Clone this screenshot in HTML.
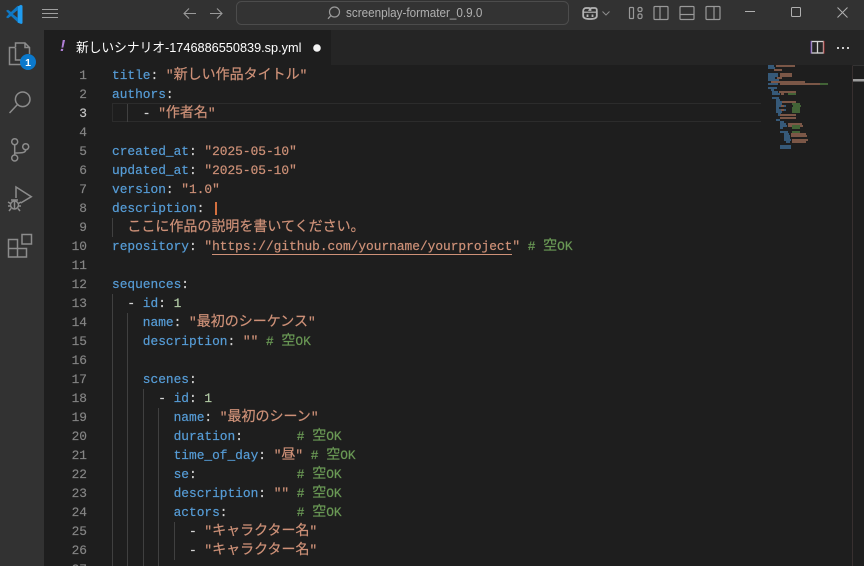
<!DOCTYPE html>
<html><head><meta charset="utf-8"><style>
html,body{margin:0;padding:0;background:#1e1e1e}
#r{position:relative;width:864px;height:566px;overflow:hidden;background:#1e1e1e;font-family:"Liberation Mono","Noto Sans CJK JP",monospace;font-size:12.83px}
#r>*{position:absolute}
.l{left:112px;height:19px;line-height:19px;white-space:pre;color:#d4d4d4;margin-top:1px;-webkit-text-stroke:.2px}
.n{left:60px;width:27px;text-align:right;height:19px;line-height:19px;color:#858585;margin-top:1px;-webkit-text-stroke:.15px}
.k{color:#569cd6}.s{color:#ce9178}.c{color:#6a9955}
i{font-style:normal;font-size:14px;font-family:"Noto Sans CJK JP",sans-serif;line-height:1}
.g{width:1px;background:#404040}
</style></head><body><div id="r">
<div style="left:0;top:0;width:864px;height:30px;background:#323232"></div>
<div style="left:0;top:30px;width:44px;height:536px;background:#323232"></div>
<div style="left:44px;top:30px;width:820px;height:35px;background:#252525"></div>
<div style="left:44px;top:30px;width:287px;height:35px;background:#1e1e1e"></div>

<svg style="left:0;top:0" width="864" height="566" fill="none">
<path d="M21 4.800 17.600 6.500V22.600L21.300 24 22.500 23.200V5.800Z" fill="#1f9cf0"/>
<path d="M17.800 5.600 11 12 8 9.700 6 10.800 9 14 6 17.200 8 18.300 11 16 17.800 22.400V18L12.800 14 17.800 10Z" fill="#0f78c4"/>
<path d="M42 9.500H58M42 13.500H58M42 17.500H58" stroke="#a0a0a0" stroke-width="1"/>
<path d="M196 13.500H184M189 8.500 184 13.500 189 18.500M210 13.500H222M217 8.500 222 13.500 217 18.500" stroke="#9a9a9a" stroke-width="1.100"/>
<rect x="236.500" y="1.500" width="332" height="23" rx="5" fill="#333" stroke="#4c4c4c"/>
<circle cx="334.500" cy="12" r="5" stroke="#9a9a9a" stroke-width="1.200"/><path d="M331 15.500 328 18.800" stroke="#9a9a9a" stroke-width="1.300"/>
<path d="M586 8H589C590 8 590.500 9 590.500 10H589.500C590 9 590.500 8 592 8H595C596.500 8 597 9.500 596.800 11V16C596.800 18 594 19 590 19 586 19 583.200 18 583.200 16V11C583 9.500 584.500 8 586 8Z" stroke="#b4b4b4" stroke-width="1.800"/><path d="M584 12.200H596" stroke="#b4b4b4" stroke-width="1.200"/><path d="M587.500 14.500V17M592.500 14.500V17" stroke="#b4b4b4" stroke-width="1.800"/>
<path d="M602.500 11.500 606 15 609.500 11.500" stroke="#8c8c8c"/>
<g stroke="#999" stroke-width="1.200">
<rect x="629.500" y="7.500" width="4" height="11" rx=".8"/><rect x="638" y="7.500" width="4" height="4" rx="1.500"/><rect x="638" y="14" width="4" height="4.500" rx="1.500"/>
<rect x="654" y="6.500" width="14" height="13" rx="1"/><path d="M660 6.500V19.500"/>
<rect x="680" y="6.500" width="14" height="13" rx="1"/><path d="M680 14.500H694"/>
<rect x="706" y="6.500" width="14" height="13" rx="1"/><path d="M714 6.500V19.500"/>
</g>
<path d="M745 11.500H755" stroke="#b0b0b0"/><rect x="791.500" y="7.500" width="9" height="9" rx="1" stroke="#b0b0b0"/>
<path d="M837.500 7.500 847.500 17.500M847.500 7.500 837.500 17.500" stroke="#b0b0b0"/>

<g stroke="#8c8c8c" stroke-width="1.500">
<path d="M15.500 47V43H25L29.500 47.500V54M15.500 47.500H9.500V64.500H22V60M15.500 47.500V60H23M25 43V47.500H29.500"/>
<circle cx="22.700" cy="99.300" r="7.300"/><path d="M17.500 104.500 9.500 113"/>
<circle cx="14.700" cy="141.700" r="3"/><circle cx="14.700" cy="158" r="3"/><circle cx="25.700" cy="146.700" r="3"/><path d="M14.700 145V155M14.700 153C21 153 25.700 153 25.700 150"/>
<path d="M16 198V187L31.300 196.700 20.700 203"/>
<circle cx="14.500" cy="205" r="4"/><path d="M8 202 10.500 203.500M8 206H10.500M9 211 11 208.500M21 202 18.500 203.500M21 206H18.500M20 211 18 208.500M14.500 201V209M11 200H18"/>
<path d="M8.500 239.500H17.500V257H8.500ZM17.500 248.500H26.500V257H17.500ZM8.500 248.500H17.500"/><rect x="22" y="234.500" width="9.500" height="9.500"/>
</g>
<circle cx="28" cy="62" r="8" fill="#0b79cc"/>
<text x="28" y="66" text-anchor="middle" font-family="Liberation Sans" font-size="10.500" font-weight="700" fill="#fff">1</text>

<g stroke="#d4d4d4" stroke-width="1.300"><rect x="811.500" y="41.500" width="12" height="11.500"/><path d="M817.500 41.500V53"/></g>
<path d="M811 41V53.500" stroke="#6d3fb0"/><path d="M824 41V53.500" stroke="#a33"/>
<g fill="#ccc"><rect x="837" y="47" width="2" height="2"/><rect x="842" y="47" width="2" height="2"/><rect x="847" y="47" width="2" height="2"/></g>
<circle cx="317" cy="48" r="3.800" fill="#f4f4f4"/>

<path d="M852.500 65.500V566" stroke="#383030"/><path d="M853 65.500H864" stroke="#333"/>
<rect x="853" y="79" width="11" height="2.500" fill="#9d9d9d"/>
<g opacity=".75">
<g fill="#3f6d96"><rect x="768" y="65" width="6" height="2"/><rect x="768" y="67" width="7" height="2"/><rect x="768" y="73" width="10" height="2"/><rect x="768" y="75" width="10" height="2"/><rect x="768" y="77" width="7" height="2"/><rect x="768" y="79" width="11" height="2"/><rect x="768" y="83" width="10" height="2"/><rect x="768" y="87" width="9" height="2"/><rect x="771" y="89" width="3" height="2"/><rect x="772" y="91" width="6" height="2"/><rect x="772" y="93" width="8" height="2"/><rect x="772" y="97" width="7" height="2"/><rect x="776" y="99" width="4" height="2"/><rect x="776" y="101" width="6" height="2"/><rect x="776" y="103" width="6" height="2"/><rect x="776" y="105" width="10" height="2"/><rect x="776" y="107" width="3" height="2"/><rect x="776" y="109" width="10" height="2"/><rect x="776" y="111" width="6" height="2"/><rect x="778" y="113" width="3" height="3"/><rect x="776" y="119" width="4" height="2"/><rect x="780" y="121" width="4" height="2"/><rect x="780" y="123" width="6" height="2"/><rect x="780" y="125" width="7" height="2"/><rect x="780" y="127" width="3" height="2"/><rect x="780" y="131" width="8" height="2"/><rect x="784" y="133" width="5" height="2"/><rect x="784" y="135" width="6" height="2"/><rect x="784" y="137" width="6" height="2"/><rect x="784" y="139" width="7" height="2"/><rect x="786" y="141" width="4" height="2"/><rect x="780" y="145" width="11" height="2"/><rect x="780" y="147" width="11" height="2"/></g>
<g fill="#9a6b55"><rect x="776" y="65" width="19" height="2"/><rect x="774" y="69" width="8" height="2"/><rect x="780" y="73" width="12" height="2"/><rect x="780" y="75" width="12" height="2"/><rect x="777" y="77" width="5" height="2"/><rect x="771" y="81" width="34" height="2"/><rect x="780" y="83" width="40" height="2"/><rect x="779" y="91" width="17" height="2"/><rect x="781" y="93" width="3" height="2"/><rect x="782" y="101" width="14" height="2"/><rect x="781" y="105" width="3" height="2"/><rect x="781" y="109" width="3" height="2"/><rect x="780" y="114" width="16" height="2"/><rect x="780" y="117" width="16" height="2"/><rect x="788" y="123" width="14" height="2"/><rect x="788" y="125" width="15" height="2"/><rect x="791" y="133" width="15" height="2"/><rect x="791" y="135" width="16" height="2"/><rect x="792" y="139" width="16" height="2"/><rect x="792" y="141" width="14" height="2"/></g>
<g fill="#4e7a3f"><rect x="820" y="83" width="8" height="2"/><rect x="788" y="93" width="8" height="2"/><rect x="792" y="103" width="8" height="2"/><rect x="793" y="105" width="8" height="2"/><rect x="792" y="107" width="8" height="2"/><rect x="792" y="109" width="8" height="2"/><rect x="792" y="111" width="8" height="2"/><rect x="792" y="125" width="8" height="2"/><rect x="792" y="127" width="8" height="2"/><rect x="792" y="131" width="8" height="2"/></g>
</g>
</svg>

<div style="left:60px;top:38px;font:italic 700 16px 'Liberation Sans',sans-serif;color:#b180d7">!</div>
<div style="left:76px;top:39px;line-height:18px;font-family:'Liberation Sans','Noto Sans CJK JP',sans-serif;font-size:13px;color:#fff;white-space:pre;transform:scaleX(.978);transform-origin:0 0">新しいシナリオ-1746886550839.sp.yml</div>
<div style="left:345.500px;top:4px;line-height:19px;font-family:'Liberation Sans',sans-serif;font-size:12.500px;color:#b0b0b0;white-space:pre;transform:scaleX(.935);transform-origin:0 0">screenplay-formater_0.9.0</div>

<div style="left:112px;top:103px;width:648px;height:17px;border:1px solid #2c2c2c;border-right:0"></div>
<div class="g" style="left:127px;top:104px;height:18px"></div>
<div class="g" style="left:112px;top:218px;height:19px"></div>
<div class="g" style="left:112px;top:294px;height:272px"></div>
<div class="g" style="left:127px;top:313px;height:253px"></div>
<div class="g" style="left:143px;top:389px;height:177px"></div>
<div class="g" style="left:158px;top:408px;height:158px"></div>
<div class="g" style="left:174px;top:522px;height:38px"></div>
<div style="left:215px;top:202px;width:1.500px;height:13px;background:#d5703f"></div>
<div style="left:212px;top:254px;width:300px;height:1px;background:#ce9178"></div>

<div class="n" style="top:65px">1</div><div class="l" style="top:65px"><span class="k">title</span>: <span class="s">"<i>新しい作品タイトル</i>"</span></div>
<div class="n" style="top:84px">2</div><div class="l" style="top:84px"><span class="k">authors</span>:</div>
<div class="n" style="top:103px;color:#c6c6c6">3</div><div class="l" style="top:103px">    - <span class="s">"<i>作者名</i>"</span></div>
<div class="n" style="top:122px">4</div>
<div class="n" style="top:141px">5</div><div class="l" style="top:141px"><span class="k">created_at</span>: <span class="s">"2025-05-10"</span></div>
<div class="n" style="top:160px">6</div><div class="l" style="top:160px"><span class="k">updated_at</span>: <span class="s">"2025-05-10"</span></div>
<div class="n" style="top:179px">7</div><div class="l" style="top:179px"><span class="k">version</span>: <span class="s">"1.0"</span></div>
<div class="n" style="top:198px">8</div><div class="l" style="top:198px"><span class="k">description</span>: </div>
<div class="n" style="top:217px">9</div><div class="l" style="top:217px">  <span class="s"><i>ここに作品の説明を書いてください。</i></span></div>
<div class="n" style="top:236px">10</div><div class="l" style="top:236px"><span class="k">repository</span>: <span class="s">"https://github.com/yourname/yourproject"</span> <span class="c"># <i>空</i>OK</span></div>
<div class="n" style="top:255px">11</div>
<div class="n" style="top:274px">12</div><div class="l" style="top:274px"><span class="k">sequences</span>:</div>
<div class="n" style="top:293px">13</div><div class="l" style="top:293px">  - <span class="k">id</span>: <span style="color:#b5cea8">1</span></div>
<div class="n" style="top:312px">14</div><div class="l" style="top:312px">    <span class="k">name</span>: <span class="s">"<i>最初のシーケンス</i>"</span></div>
<div class="n" style="top:331px">15</div><div class="l" style="top:331px">    <span class="k">description</span>: <span class="s">""</span> <span class="c"># <i>空</i>OK</span></div>
<div class="n" style="top:350px">16</div>
<div class="n" style="top:369px">17</div><div class="l" style="top:369px">    <span class="k">scenes</span>:</div>
<div class="n" style="top:388px">18</div><div class="l" style="top:388px">      - <span class="k">id</span>: <span style="color:#b5cea8">1</span></div>
<div class="n" style="top:407px">19</div><div class="l" style="top:407px">        <span class="k">name</span>: <span class="s">"<i>最初のシーン</i>"</span></div>
<div class="n" style="top:426px">20</div><div class="l" style="top:426px">        <span class="k">duration</span>:       <span class="c"># <i>空</i>OK</span></div>
<div class="n" style="top:445px">21</div><div class="l" style="top:445px">        <span class="k">time_of_day</span>: <span class="s">"<i>昼</i>"</span> <span class="c"># <i>空</i>OK</span></div>
<div class="n" style="top:464px">22</div><div class="l" style="top:464px">        <span class="k">se</span>:             <span class="c"># <i>空</i>OK</span></div>
<div class="n" style="top:483px">23</div><div class="l" style="top:483px">        <span class="k">description</span>: <span class="s">""</span> <span class="c"># <i>空</i>OK</span></div>
<div class="n" style="top:502px">24</div><div class="l" style="top:502px">        <span class="k">actors</span>:         <span class="c"># <i>空</i>OK</span></div>
<div class="n" style="top:521px">25</div><div class="l" style="top:521px">          - <span class="s">"<i>キャラクター名</i>"</span></div>
<div class="n" style="top:540px">26</div><div class="l" style="top:540px">          - <span class="s">"<i>キャラクター名</i>"</span></div>
<div class="n" style="top:559px">27</div>
</div></body></html>
